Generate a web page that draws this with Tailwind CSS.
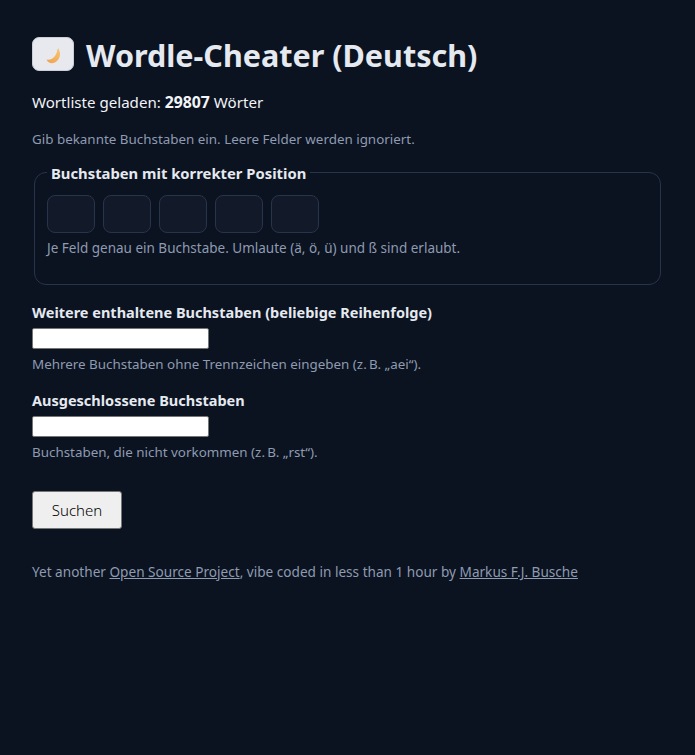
<!DOCTYPE html>
<html lang="de">
<head>
<meta charset="utf-8">
<title>Wordle-Cheater</title>
<script src="https://cdn.jsdelivr.net/npm/@tailwindcss/browser@4"></script>
</head>
<body class="bg-[#0b1220] text-[#e5e9f0] font-['Noto_Sans',sans-serif] text-[14px] h-[755px] overflow-hidden">
<main class="p-8">
  <h1 class="flex items-center gap-3 text-[30.5px] font-bold leading-[38px] h-[38px] mt-[4px] whitespace-nowrap">
    <span class="w-[42px] h-[34px] mb-[3px] rounded-[7px] bg-[#e7e9ee] border border-[#c9ced8] flex items-center justify-center">
      <svg class="mt-[4px] ml-[1px]" width="16" height="16" viewBox="0 0 16 16"><defs><linearGradient id="b" x1="0" y1="1" x2="1" y2="0"><stop offset="0" stop-color="#f0a04e"/><stop offset="1" stop-color="#f7c56b"/></linearGradient></defs><path d="M0.500 11.500c3 .8 6.500-.6 8.500-3.500 1.500-2.300 2.400-4.500 2.600-7l1.200-.4.300 2c1.500 2.600 1.200 6-.6 8.700-1.800 2.700-4.600 4-7.200 3.900-2.200-.1-3.900-1.700-4.800-3.700z" fill="url(#b)"/></svg>
    </span>
    <span>Wordle-Cheater (Deutsch)</span>
  </h1>
  <p class="mt-[18px] text-[15.1px] leading-5 text-[#f2f4f8]">Wortliste geladen: <strong class="font-bold text-[15.8px]">29807</strong> Wörter</p>
  <p class="mt-[18px] text-[13.4px] leading-[18px] text-[#8e9bb0]">Gib bekannte Buchstaben ein. Leere Felder werden ignoriert.</p>
  <fieldset class="mt-[15px] mx-[2px] border border-[#27354a] rounded-xl px-3 pt-[14px] min-w-0 h-[122px]">
    <legend class="px-[4px] text-[14.8px] font-bold leading-[18px] text-[#e5e9f0] translate-y-[1px]">Buchstaben mit korrekter Position</legend>
    <div class="flex gap-2">
      <input class="w-12 h-[38px] rounded-lg border border-[#27354a] bg-[#121a29]" maxlength="1" aria-label="Buchstabe 1">
      <input class="w-12 h-[38px] rounded-lg border border-[#27354a] bg-[#121a29]" maxlength="1" aria-label="Buchstabe 2">
      <input class="w-12 h-[38px] rounded-lg border border-[#27354a] bg-[#121a29]" maxlength="1" aria-label="Buchstabe 3">
      <input class="w-12 h-[38px] rounded-lg border border-[#27354a] bg-[#121a29]" maxlength="1" aria-label="Buchstabe 4">
      <input class="w-12 h-[38px] rounded-lg border border-[#27354a] bg-[#121a29]" maxlength="1" aria-label="Buchstabe 5">
    </div>
    <p class="mt-[6px] text-[13.5px] leading-[18px] text-[#8e9bb0]">Je Feld genau ein Buchstabe. Umlaute (ä, ö, ü) und ß sind erlaubt.</p>
  </fieldset>
  <label class="block mt-[17px] text-[14.5px] font-bold leading-[20px]">Weitere enthaltene Buchstaben (beliebige Reihenfolge)</label>
  <input class="block mt-[6px] w-[177px] h-[21px] bg-white border border-[#767676] rounded-[2px]" aria-label="Weitere">
  <p class="mt-[6px] text-[13.4px] leading-[18px] text-[#8e9bb0]">Mehrere Buchstaben ohne Trennzeichen eingeben (z.&#8239;B. „aei“).</p>
  <label class="block mt-[17px] text-[14.5px] font-bold leading-[20px]">Ausgeschlossene Buchstaben</label>
  <input class="block mt-[6px] w-[177px] h-[21px] bg-white border border-[#767676] rounded-[2px]" aria-label="Ausgeschlossen">
  <p class="mt-[6px] text-[13.4px] leading-[18px] text-[#8e9bb0]">Buchstaben, die nicht vorkommen (z.&#8239;B. „rst“).</p>
  <button class="block mt-[30px] w-[90px] h-[38px] bg-[#efefef] border border-[#767676] rounded-[3px] text-black text-[15px] font-light">Suchen</button>
  <p class="mt-[34px] text-[13.6px] leading-[18px] text-[#8e9bb0]">Yet another <a href="#" class="underline">Open Source Project</a>, vibe coded in less than 1 hour by <a href="#" class="underline">Markus F.J. Busche</a></p>
</main>
</body>
</html>
